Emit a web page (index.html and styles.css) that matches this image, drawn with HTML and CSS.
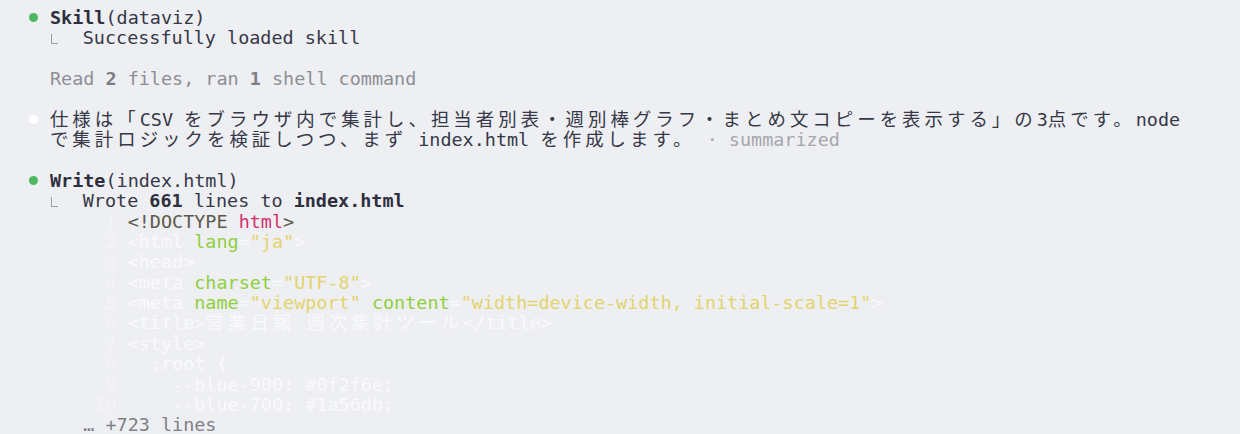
FILE: index.html
```html
<!DOCTYPE html>
<html lang="ja">
<head>
<meta charset="UTF-8">
<title>Session log</title>
<link rel="stylesheet" href="styles.css">
</head>
<body>
<main class="log">
  <section class="entry">
    <div class="line"><span class="dot dot-green"></span><b class="strong">Skill</b>(dataviz)</div>
    <div class="line sub"><span class="elbow"></span>Successfully loaded skill</div>
  </section>
  <section class="entry">
    <div class="line sub muted">Read <b>2</b> files, ran <b>1</b> shell command</div>
  </section>
  <section class="entry">
    <div class="line"><span class="dot dot-white"></span><span class="j">仕様は「</span>CSV <span class="j">をブラウザ内で集計し、担当者別表・週別棒グラフ・まとめ文コピーを表示する」の</span>3<span class="j">点です。</span>node</div>
    <div class="line sub"><span class="j">で集計ロジックを検証しつつ、まず</span> index.html <span class="j">を作成します。</span> <span class="faint-gray">· summarized</span></div>
  </section>
  <section class="entry">
    <div class="line"><span class="dot dot-green"></span><b class="strong">Write</b>(index.html)</div>
    <div class="line sub"><span class="elbow"></span>Wrote <b class="strong">661</b> lines to <b class="strong">index.html</b></div>
    <div class="code">
      <div class="cl"><span class="ln">1</span><span class="t-doc">&lt;!DOCTYPE </span><span class="t-pink">html</span><span class="t-doc">&gt;</span></div>
      <div class="cl"><span class="ln">2</span><span class="t-fade">&lt;html </span><span class="t-attr">lang</span><span class="t-fade">=</span><span class="t-str">"ja"</span><span class="t-fade">&gt;</span></div>
      <div class="cl"><span class="ln">3</span><span class="t-fade">&lt;head&gt;</span></div>
      <div class="cl"><span class="ln">4</span><span class="t-fade">&lt;meta </span><span class="t-attr">charset</span><span class="t-fade">=</span><span class="t-str">"UTF-8"</span><span class="t-fade">&gt;</span></div>
      <div class="cl"><span class="ln">5</span><span class="t-fade">&lt;meta </span><span class="t-attr">name</span><span class="t-fade">=</span><span class="t-str">"viewport"</span> <span class="t-attr">content</span><span class="t-fade">=</span><span class="t-str">"width=device-width, initial-scale=1"</span><span class="t-fade">&gt;</span></div>
      <div class="cl"><span class="ln">6</span><span class="t-fade">&lt;title&gt;<span class="j">営業日報</span> <span class="j">週次集計ツール</span>&lt;/title&gt;</span></div>
      <div class="cl"><span class="ln">7</span><span class="t-fade">&lt;style&gt;</span></div>
      <div class="cl"><span class="ln">8</span><span class="t-fade">  :root {</span></div>
      <div class="cl"><span class="ln">9</span><span class="t-fade">    --blue-900: #0f2f6e;</span></div>
      <div class="cl"><span class="ln">10</span><span class="t-fade">    --blue-700: #1a56db;</span></div>
    </div>
    <div class="line more">… +723 lines</div>
  </section>
</main>
</body>
</html>
```

FILE: styles.css
```css
html, body {
  margin: 0;
  padding: 0;
  background: #eeeff2;
}

body {
  font-family: "DejaVu Sans Mono", "Noto Sans CJK JP", monospace;
  font-size: 18.44px;
  line-height: 20.4px;
  color: #363847;
  width: 1240px;
  height: 434px;
  overflow: hidden;
}

.log {
  display: flex;
  flex-direction: column;
  gap: 20.4px;
  padding: 7.6px 0 0 27.75px;
}

.entry {
  display: flex;
  flex-direction: column;
}

.line,
.cl {
  height: 20.4px;
  white-space: pre;
}

.sub {
  padding-left: 2ch;
}

.strong {
  font-weight: bold;
  color: #2e3040;
}

.muted {
  color: #8d8e94;
}

.muted b {
  color: #7d7e85;
}

.faint-gray {
  color: #a6a7ad;
}

.j {
  letter-spacing: 4px;
}

.dot {
  display: inline-block;
  width: 9px;
  height: 9px;
  border-radius: 50%;
  margin-left: 1px;
  margin-right: calc(2ch - 10px);
  vertical-align: 2px;
}

.dot-green {
  background: #4cb862;
}

.dot-white {
  background: #ffffff;
}

.elbow {
  display: inline-block;
  width: 6px;
  height: 9px;
  border-left: 1.5px solid #9c9da4;
  border-bottom: 1.5px solid #9c9da4;
  margin-left: 1px;
  margin-right: calc(3ch - 8.5px);
  vertical-align: 0;
}

.code {
  padding-left: 2ch;
}

.ln {
  display: inline-block;
  width: 6ch;
  margin-right: 1ch;
  text-align: right;
  color: #f3f4f6;
}

.t-doc {
  color: #5b5a4b;
}

.t-pink {
  color: #d4306f;
}

.t-fade {
  color: #f9fafb;
}

.t-attr {
  color: #8fcf3e;
}

.t-str {
  color: #e3d36e;
}

.more {
  padding-left: 5ch;
  color: #7e7f86;
}
```
